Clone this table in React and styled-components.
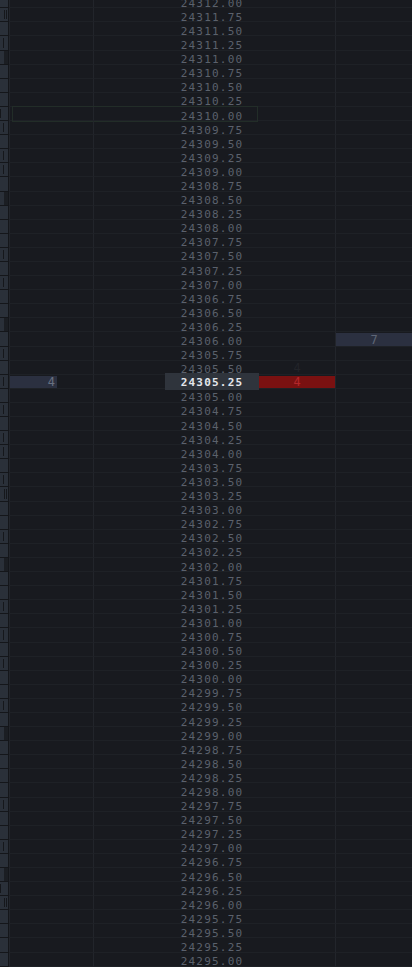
import React from 'react'
import styled, { createGlobalStyle, css } from 'styled-components'

const GlobalStyle = createGlobalStyle`
  html, body {
    margin: 0;
    padding: 0;
    background: #181a1f;
    overflow: hidden;
  }
`

const ROW_H = 14.1

const Ladder = styled.div`
  width: 412px;
  height: 967px;
  overflow: hidden;
  background: #181a1f;
  font-family: "DejaVu Sans Mono", "Liberation Mono", monospace;
`

const List = styled.div`
  margin-top: -5.8px;
`

const Row = styled.div`
  position: relative;
  display: grid;
  grid-template-columns: 9px 84px 72px 94px 76px 77px;
  height: ${ROW_H}px;
  box-sizing: border-box;
`

const Cell = styled.div`
  position: relative;
  height: ${ROW_H}px;
  box-sizing: border-box;
  border-bottom: 1px solid #1e2126;
  ${p => p.$left && css`border-left: 1px solid #22252b;`}
`

const Strip = styled.div`
  height: ${ROW_H}px;
  box-sizing: border-box;
  border-right: 1px solid #14161a;
  border-bottom: 1px solid #14161a;
  background: ${p => p.$kind === 's'
    ? 'linear-gradient(90deg, #2a3039 0 4px, #1b1e23 4px)'
    : '#2a3039'};
  position: relative;
`

const Tick = styled.span`
  position: absolute;
  top: 2px;
  bottom: 2px;
  left: ${p => p.$x}px;
  width: 1px;
  background: #15171b;
`

const Bar = styled.div`
  position: absolute;
  top: 1px;
  bottom: 0;
  left: 0;
  width: ${p => p.$w || '100%'};
  background: ${p => p.$bg};
`

const Size = styled.span`
  position: relative;
  display: flex;
  height: 100%;
  align-items: center;
  justify-content: ${p => p.$align || 'center'};
  padding: 2px 0 0;
  box-sizing: border-box;
  font-size: 12px;
  color: ${p => p.$color};
`

const PriceCell = styled.div`
  display: flex;
  align-items: center;
  justify-content: center;
  height: ${ROW_H}px;
  box-sizing: border-box;
  padding-top: 5px;
  border-bottom: 1px solid #1e2126;
  font-size: 11px;
  letter-spacing: 1.2px;
  color: #5b616c;
  ${p => p.$selected && css`
    height: 17px;
    margin: -1.5px 0;
    padding-top: 2px;
    background: #2f343c;
    color: #e4e7ec;
    font-weight: bold;
    border-bottom: none;
    z-index: 1;
  `}
`

const Outline = styled.div`
  position: absolute;
  left: 12px;
  width: 244px;
  top: -1px;
  bottom: -1px;
  border: 1px solid #222d28;
  pointer-events: none;
`

const stripKinds = 'fdftsfffltfttfsffftftffsftft' +
  'ftfttftdfftfsfftftftfftfsfff' +
  'ftfftfsld'.padEnd(13, 'f')

const tickPos = { t: [3], d: [4, 6], l: [0] }

const prices = Array.from({ length: 69 }, (_, i) => (24312 - i * 0.25).toFixed(2))

const App = () => (
  <Ladder>
    <GlobalStyle />
    <List>
      {prices.map((p, i) => {
        const kind = stripKinds[i] || 'f'
        return (
          <Row key={p}>
            <Strip $kind={kind}>
              {(tickPos[kind] || []).map(x => <Tick key={x} $x={x} />)}
            </Strip>
            <Cell $left>
              {i === 27 && (
                <>
                  <Bar $bg="#2b3040" $w="47px" />
                  <Size $align="flex-end" $color="#687080" style={{ width: 45 }}>4</Size>
                </>
              )}
            </Cell>
            <Cell $left />
            <PriceCell $selected={i === 27}>{p}</PriceCell>
            <Cell>
              {i === 26 && <Size $color="#222429">4</Size>}
              {i === 27 && (
                <>
                  <Bar $bg="#7a1111" />
                  <Size $color="#b3272a">4</Size>
                </>
              )}
            </Cell>
            <Cell $left>
              {i === 24 && (
                <>
                  <Bar $bg="#2b3040" />
                  <Size $color="#5f6676">7</Size>
                </>
              )}
            </Cell>
            {i === 8 && <Outline />}
          </Row>
        )
      })}
    </List>
  </Ladder>
)

export default App
